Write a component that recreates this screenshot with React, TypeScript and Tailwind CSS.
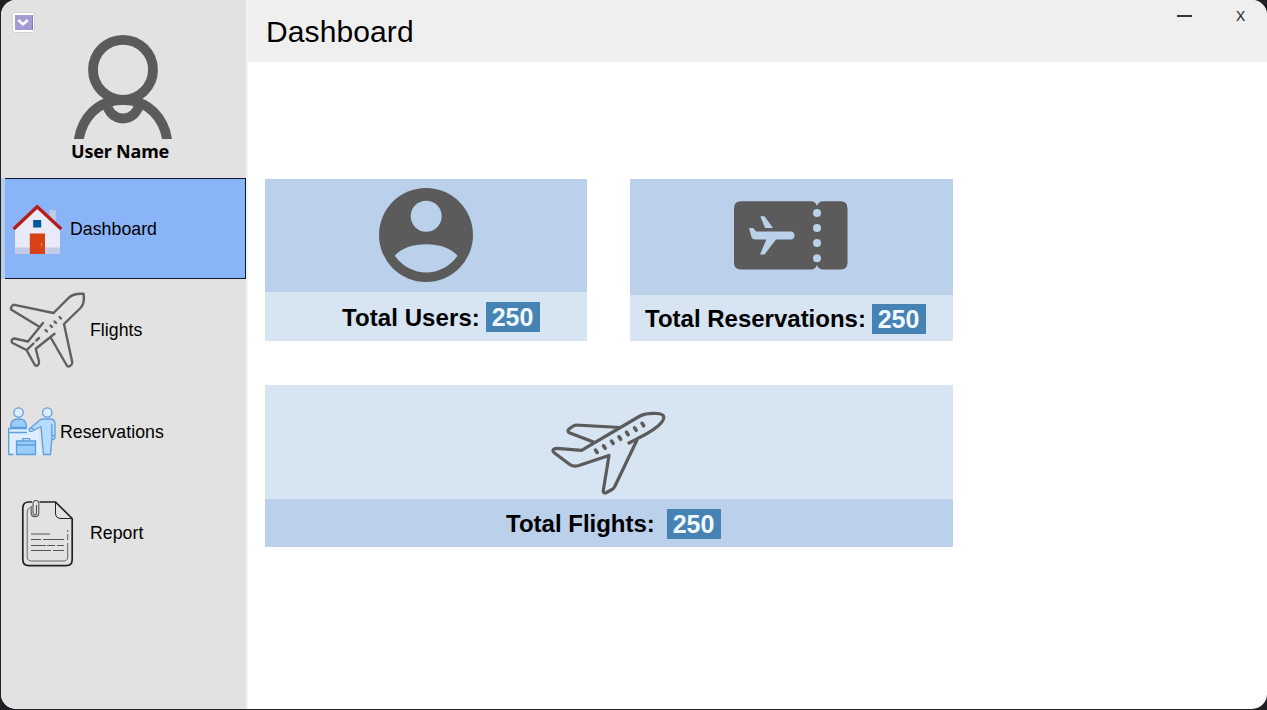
import React from "react";

function UserOutline() {
  return (
    <svg width="104" height="107" viewBox="71 32 104 107" fill="none" stroke="#5b5b5b" strokeWidth="9.800">
      <circle cx="123" cy="69.800" r="30" />
      <path d="M78.300 143C81 118 98 99.800 123 99.800S165 118 167.600 143" />
      <path d="M106.500 102C109 124 137 124 139.500 102" />
    </svg>
  );
}

function House() {
  return (
    <svg width="50" height="52" viewBox="12 203 50 52">
      <path d="M49.500 210h6.300v16h-6.300z" fill="#c5cae9" />
      <path d="M15 226L37.200 205.500L60 226V254H15z" fill="#e8eaf6" />
      <path d="M15 247.500h45V254H15z" fill="#c5cae9" />
      <path d="M29.800 233.500h15.200V254H29.800z" fill="#d84315" />
      <path d="M33.200 220h8v7.500h-8z" fill="#01579b" />
      <path d="M13.600 229L37.200 206.800L61.200 229" fill="none" stroke="#b71c1c" strokeWidth="3.400" />
      <path d="M41.700 243v3.500" stroke="#ff8a65" strokeWidth="1" />
    </svg>
  );
}

function Plane() {
  return (
    <svg width="78" height="78" viewBox="8 291 78 78" fill="none" stroke="#606060" strokeWidth="2.400" strokeLinecap="round" strokeLinejoin="round">
      <path d="M53.500 313L14.500 304.800C12.500 304.700 10.500 307 11 309.500L38.500 326.300" />
      <path d="M53.500 313L69 297.500Q74 293 83.500 293.800Q85 303 80.500 308L64 324L72.300 362.500C72 366 68 368 66.500 365L51 338" />
      <path d="M43 323L28 341.500L14.500 338.500C12 338.500 10.500 341 12.500 343L26.500 350L34.800 365C36.500 367 39.500 365 39 361.500L35.800 348.800L54.500 333.800" />
      <path d="M26.800 349.800L33.500 343.500M36.300 340.500L39 338M45.500 330L47 331.500M50.500 325.500L52 327M54.500 321.500L56 323M59.500 317L61 318.500" />
    </svg>
  );
}

function CheckIn() {
  return (
    <svg width="50" height="50" viewBox="7 407 50 50" stroke="#5e9edb" strokeWidth="1.300" strokeLinejoin="round">
      <path d="M9 428.500H38L42 455H9z" fill="#deedff" stroke="none" />
      <path d="M10.800 427.500V425C11 421 14 419 18.500 419S26 421 26.300 425V427.500z" fill="#99ccff" />
      <circle cx="18.500" cy="412.500" r="4.700" fill="#deedff" />
      <circle cx="47.300" cy="412.500" r="4.700" fill="#deedff" />
      <path d="M43 419H50C53 419 55 421 55 424V437Q55 440 51.800 439.500L50.500 454.500H43.500L41 426.500L32.500 431C29 432.500 27.500 429 31 427.500L40 420Q41.500 419 43 419z" fill="#b8dcff" />
      <path d="M51.800 424V439M52 435.500H54.800M31 428.500Q34 428 33.500 431" fill="none" />
      <path d="M8.700 455V428.500H27M9 432.500H27M8.700 454.500H13.500" fill="none" />
      <path d="M16.500 441H35.500V454.500H16.500z" fill="#99ccff" />
      <path d="M22.500 441V438.700H29.500V441M16.500 445H35.500M24.500 445h3" fill="none" />
    </svg>
  );
}

function Report() {
  return (
    <svg width="54" height="69" viewBox="21 499 54 69" fill="none" stroke="#222" strokeWidth="1.700" strokeLinejoin="round">
      <path d="M32 502H29Q22.800 502 22.800 508V559.500Q22.800 565.700 29 565.700H66Q72.200 565.700 72.200 559.500V518.500L55.500 502H39.500" />
      <path d="M55.500 502V513Q55.500 518.500 61 518.500H72" strokeWidth="1" />
      <path d="M30 507.500Q27.200 508.500 27.200 512V557Q27.200 561 31.500 561H63.500Q67.700 561 67.700 557V543M67.700 540V534M67.700 532V530" stroke="#666" strokeWidth="1" />
      <path d="M36.500 505V512C36.500 516 33 516 33 512.500V503.500C33 499.500 38.800 499.500 38.800 503.500V512.500C38.800 518 31.200 518 31.200 512.500V506" stroke="#555" strokeWidth="1.100" />
      <path d="M31 534h19M31 539.500h10M43 539.500h21M31 545.500h15M47 545.500h8M57 545.500h7M31 550.500h20M53 550.500h11" stroke="#555" strokeWidth="1.200" />
    </svg>
  );
}

function Account() {
  return (
    <svg width="96" height="96" viewBox="378 187 96 96">
      <circle cx="426" cy="235" r="47" fill="#5b5b5b" />
      <circle cx="426.200" cy="216.200" r="15.500" fill="#bad0eb" />
      <path d="M394.800 255.700C407 240.500 445 240.500 457.500 255.700C442 278 410.500 278 394.800 255.700z" fill="#bad0eb" />
    </svg>
  );
}

function Ticket() {
  return (
    <svg width="116" height="70" viewBox="733 201 116 70">
      <path d="M741 201.300H811Q815.500 201.500 817 206Q818.500 201.500 823 201.300H840.500Q847.500 201.300 847.500 208.500V262.500Q847.500 269.500 840.500 269.500H823Q818.500 269.300 817 265Q815.500 269.300 811 269.500H741Q734 269.500 734 262.500V208.500Q734 201.300 741 201.300z" fill="#5b5b5b" />
      <g fill="#bad0eb">
        <circle cx="817" cy="213" r="4" />
        <circle cx="817" cy="228" r="4" />
        <circle cx="817" cy="243" r="4" />
        <circle cx="817" cy="258.200" r="4" />
        <path d="M749 228H753L756 231.500H790.500Q794.500 231.800 794.500 235.500T790.500 239.500H776L764.500 254.500H760L766.300 239.500H755Q752.500 239.500 751.700 237.500z" />
        <path d="M760.300 216.200H764.500L773 228H765z" />
      </g>
    </svg>
  );
}

function Takeoff() {
  return (
    <svg width="116" height="86" viewBox="550 410 116 86" fill="none" stroke="#5b5b5b" strokeWidth="3.200" strokeLinecap="round" strokeLinejoin="round">
      <path d="M620 427.500L576 425Q574.500 425 573 426.200L569 429Q566.500 431.500 570 433L593.500 442" />
      <path d="M629 443L637 438.800C650 432.500 658 427 661.500 422.500C666 416.500 663.500 414 657 413.500C649 413 645 413.500 640 416L581.500 450.300L557 448.300C552.500 448.300 552 451 554.500 453L569.500 464.300Q573 467 578 465.800L609 455.500L603.300 490.500C603 493 604.500 493.500 606.500 492.500L612 489.500Q613.500 488.700 614.500 487L637 440" />
      <path d="M595.500 450L597.200 452.500M603.500 445.800L605.200 448.300M611.500 441L613.200 443.500M619 436.800L620.700 439.300M626.500 432.200L628.200 434.700M634.500 427.800L636.200 430.300M642 423.300L643.700 425.800" strokeWidth="3.500" />
    </svg>
  );
}

function Count() {
  return (
    <span className="flex h-[30px] w-[54px] shrink-0 items-center justify-center bg-[#4682b4] pr-px pt-px text-[25px] leading-[30px] tracking-[-0.1px] text-[#f0f8ff]">
      250
    </span>
  );
}

export default function App() {
  return (
    <div className="h-[710px] w-[1267px] overflow-hidden bg-[#202024] pb-px pl-px font-['Liberation_Sans',Arial,sans-serif] text-black">
      <div className="flex h-full overflow-hidden rounded-[15px] bg-white">
        <aside className="flex w-[245px] shrink-0 flex-col bg-[#e2e2e2]">
          <div className="flex h-[177px] flex-col">
            <div className="flex h-8 pl-[11px] pt-3">
              <button className="flex h-[21px] w-[23px] items-center justify-center rounded-[3px] border border-[#d2d2d2] bg-white">
                <span className="flex h-[15px] w-[18px] items-center justify-center border-r border-[#8878b4] bg-[#a69ad3]">
                  <svg width="12" height="9" viewBox="0 0 12 9" fill="none" stroke="white" strokeWidth="2.500"><path d="M1.200 2L6 6.300L10.800 2" /></svg>
                </span>
              </button>
            </div>
            <div className="flex pl-[70px]"><UserOutline /></div>
            <div className="pl-[70px] font-['Noto_Sans',sans-serif] text-[18px] font-bold leading-[24px] tracking-[-0.2px]">User Name</div>
          </div>
          <nav className="flex flex-col pt-px text-[17.700px] tracking-[0.050px]">
            <a className="flex h-[101px] items-center border-l-4 border-l-[#b9cee4] bg-[#8ab4f8]">
              <span className="flex h-full w-full items-center gap-2 border-y border-r border-[#101828] pl-[7px]">
                <House /><span className="pt-[2px]">Dashboard</span>
              </span>
            </a>
            <a className="flex h-[101px] items-center gap-1 pl-[7px]"><Plane /><span className="pt-[2px]">Flights</span></a>
            <a className="flex h-[101px] items-center gap-[3px] pl-[6px] pt-[2px]"><CheckIn /><span className="pt-px">Reservations</span></a>
            <a className="flex h-[101px] items-center gap-[15px] pl-5 pt-[3px]"><Report /><span className="pt-px">Report</span></a>
          </nav>
        </aside>
        <main className="flex grow flex-col border-l-2 border-[#f3f3f3]">
          <header className="flex h-[62px] shrink-0 bg-[#efefef]">
            <h1 className="pl-[18px] pt-[14px] text-[30px] leading-[36px] tracking-[0.1px]">Dashboard</h1>
            <div className="ml-auto flex h-8 items-center gap-[44px] pr-[22px]">
              <span className="h-[1.500px] w-[15px] bg-[#333]" />
              <span className="pb-[3px] font-['Noto_Sans',sans-serif] text-[15px] leading-5 text-[#222]">X</span>
            </div>
          </header>
          <div className="flex flex-col gap-11 pl-[17px] pt-[117px]">
            <div className="flex gap-[43px] text-[24px] font-bold">
              <section className="flex h-[162px] w-[322px] flex-col bg-[#d7e4f1]">
                <div className="flex h-[113px] items-start justify-center bg-[#bad0eb] pt-2"><Account /></div>
                <div className="flex grow items-center gap-[6px] pl-[77px]"><span className="w-[138px] whitespace-nowrap pt-[2px] tracking-[0.080px]">Total Users:</span><Count /></div>
              </section>
              <section className="flex h-[162px] w-[323px] flex-col bg-[#d7e4f1]">
                <div className="flex h-[116px] items-start bg-[#bad0eb] pl-[103px] pt-[22px]"><Ticket /></div>
                <div className="flex grow items-center gap-[6px] pl-[15px] pt-px"><span className="w-[221px] whitespace-nowrap pt-px">Total Reservations:</span><Count /></div>
              </section>
            </div>
            <section className="flex h-[162px] w-[688px] flex-col bg-[#d7e4f1] text-[24px] font-bold">
              <div className="flex h-[114px] items-end pb-[3px] pl-[285px]"><Takeoff /></div>
              <div className="flex grow items-center gap-[12px] bg-[#bad0eb] pl-[241px] pt-px"><span className="w-[149px] whitespace-nowrap pt-px">Total Flights:</span><Count /></div>
            </section>
          </div>
        </main>
      </div>
    </div>
  );
}
